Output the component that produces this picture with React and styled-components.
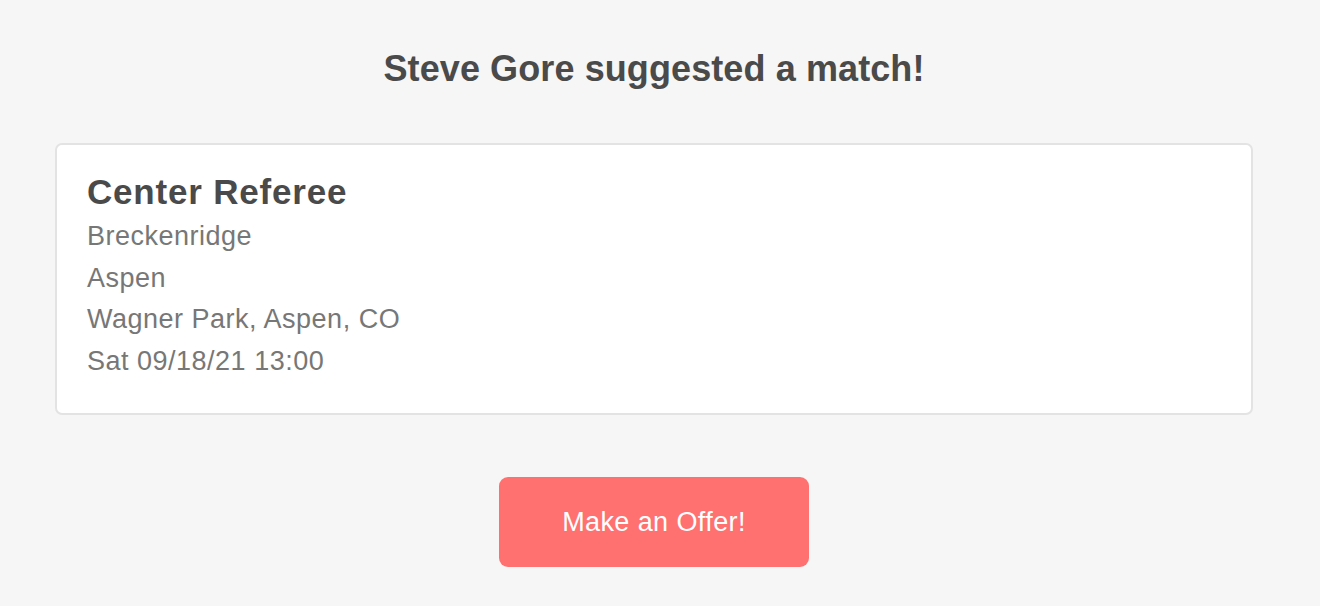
import React from "react";
import styled, { createGlobalStyle } from "styled-components";

const match = {
  suggestedBy: "Steve Gore",
  position: "Center Referee",
  home: "Breckenridge",
  away: "Aspen",
  venue: "Wagner Park, Aspen, CO",
  time: "Sat 09/18/21 13:00",
};

const GlobalStyle = createGlobalStyle`
  html, body {
    margin: 0;
    padding: 0;
    background: #f6f6f6;
    font-family: "Liberation Sans", Arial, sans-serif;
  }
`;

const Page = styled.div`
  display: flex;
  flex-direction: column;
  align-items: center;
  padding: 47px 67px 40px 55px;
  min-height: 606px;
  box-sizing: border-box;
`;

const Heading = styled.h1`
  margin: 0;
  font-size: 36px;
  font-weight: 700;
  color: #4a4a4a;
  line-height: 44px;
  letter-spacing: 0.1px;
`;

const Card = styled.div`
  align-self: stretch;
  margin-top: 52px;
  background: #fff;
  border: 2px solid #e3e3e3;
  border-radius: 7px;
  padding: 22px 30px 31px;
`;

const Position = styled.h2`
  margin: 0;
  font-size: 35px;
  font-weight: 700;
  color: #4a4a4a;
  line-height: 49px;
  letter-spacing: 0.8px;
`;

const Detail = styled.div`
  font-size: 27px;
  color: #777;
  line-height: 41.5px;
  letter-spacing: 0.5px;
`;

const OfferButton = styled.button`
  margin-top: 62px;
  width: 310px;
  height: 90px;
  border: none;
  border-radius: 9px;
  background: #ff7171;
  color: #fff;
  font-family: inherit;
  font-size: 27px;
  letter-spacing: 0.4px;
  cursor: pointer;
`;

const App = () => {
  return (
    <>
      <GlobalStyle />
      <Page>
        <Heading>{match.suggestedBy} suggested a match!</Heading>
        <Card>
          <Position>{match.position}</Position>
          <Detail>{match.home}</Detail>
          <Detail>{match.away}</Detail>
          <Detail>{match.venue}</Detail>
          <Detail>{match.time}</Detail>
        </Card>
        <OfferButton>Make an Offer!</OfferButton>
      </Page>
    </>
  );
};

export default App;
